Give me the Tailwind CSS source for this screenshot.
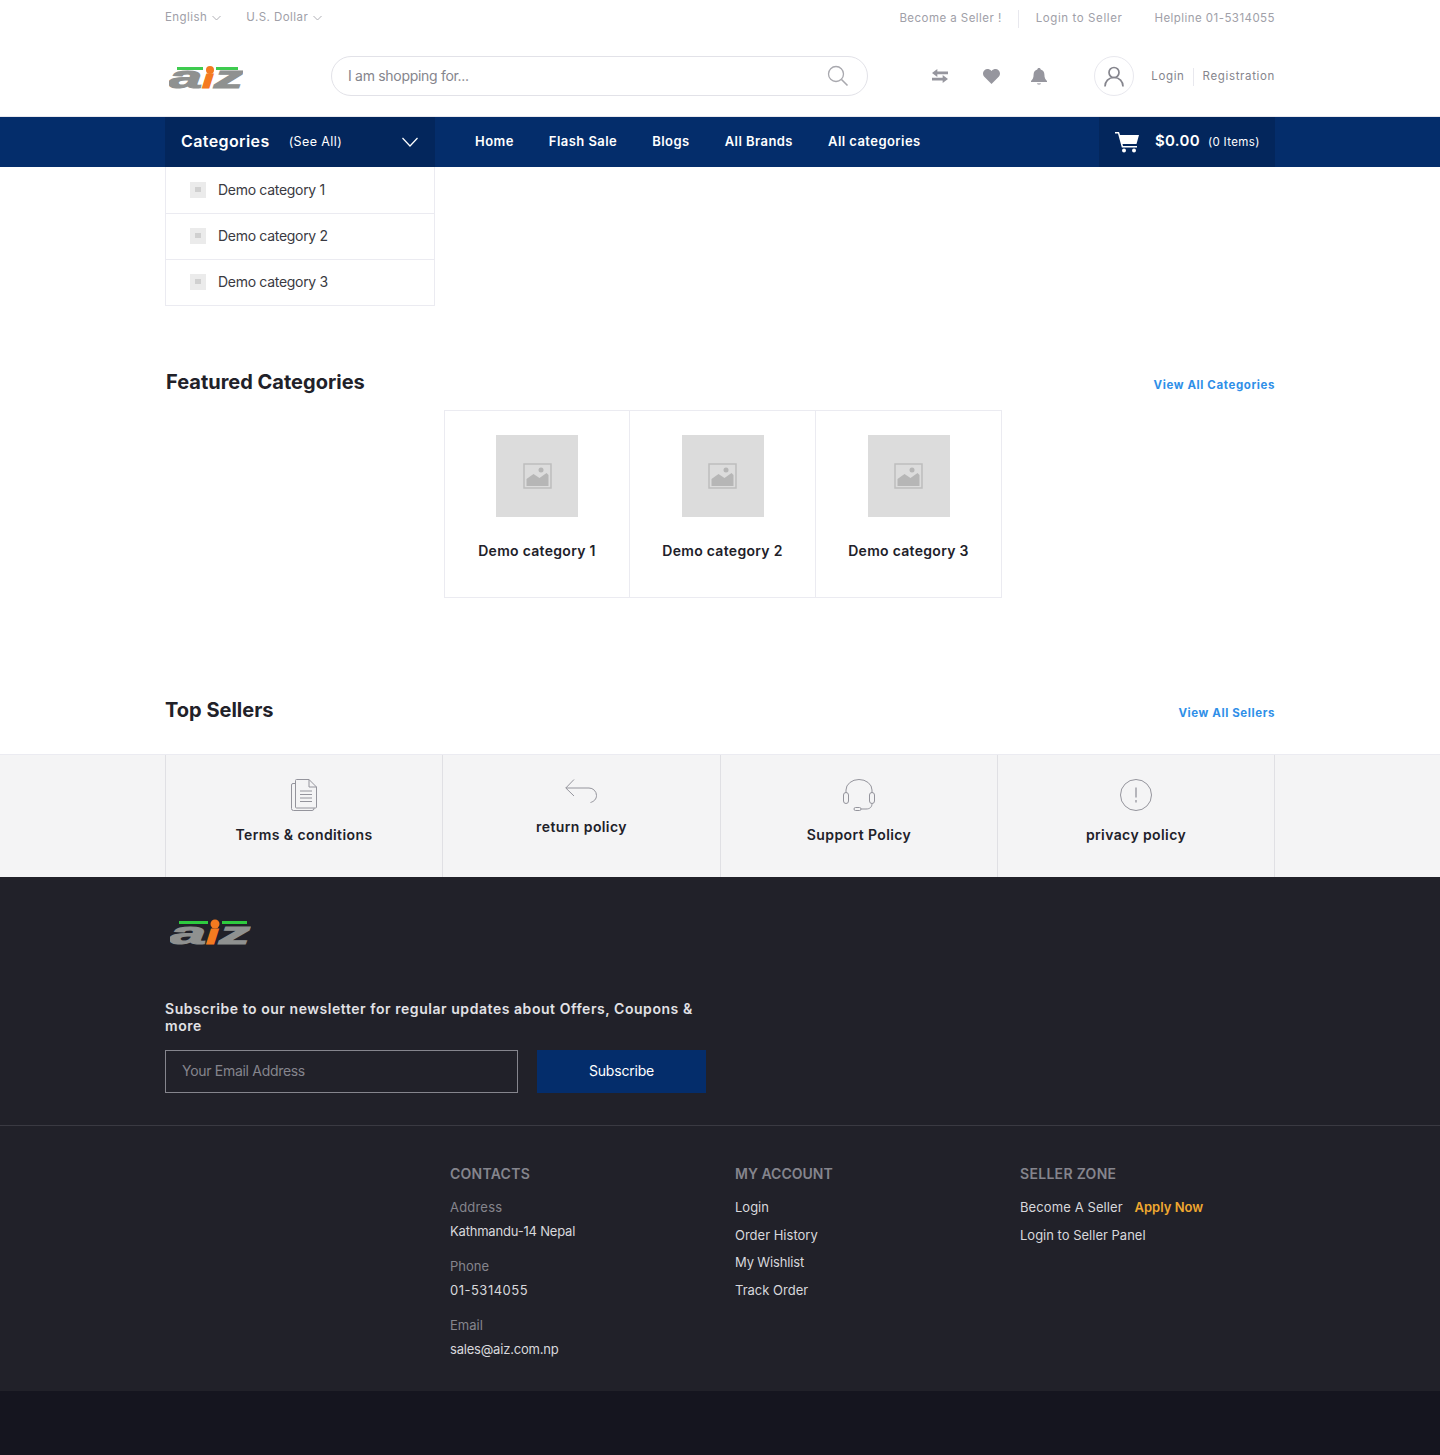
<!DOCTYPE html>
<html lang="en">
<head>
    <meta charset="UTF-8">
    <meta name="viewport" content="width=device-width, initial-scale=1.0">
    <title>Aiz Shop</title>
    <script src="https://cdn.jsdelivr.net/npm/@tailwindcss/browser@4"></script>
</head>
<body class="bg-white text-[#212129] font-['Inter','Liberation_Sans',sans-serif]">

    <!-- Top bar -->
    <div class="w-[1110px] mx-auto h-[36px] flex items-center justify-between text-[11.5px] tracking-[0.45px] text-[#a0a0a8]">
        <div class="flex items-center gap-[25px]">
            <span class="flex items-center gap-[5px]">English
                <svg class="w-[9px] h-[6px]" viewBox="0 0 9 6" fill="none" stroke="#b0b0b6"><path d="M.5 1l4 4 4-4"/></svg>
            </span>
            <span class="flex items-center gap-[5px]">U.S. Dollar
                <svg class="w-[9px] h-[6px]" viewBox="0 0 9 6" fill="none" stroke="#b0b0b6"><path d="M.5 1l4 4 4-4"/></svg>
            </span>
        </div>
        <div class="flex items-center mt-[2px]">
            <span>Become a Seller !</span>
            <span class="w-[1px] h-[18px] bg-[#e8e8ee] mx-[16.5px]"></span>
            <span class="tracking-[0.6px]">Login to Seller</span>
            <span class="ml-[32px]">Helpline 01-5314055</span>
        </div>
    </div>

    <!-- Header -->
    <div class="w-[1110px] mx-auto h-[80px] flex items-center">
        <div class="w-[166px] pl-[4px] mt-[2px]">
            <svg class="w-[74px] h-[38px] block" viewBox="0 0 74 38">
                <rect x="8" y="9" width="26" height="3" fill="#3ecb4f"/>
                <rect x="47" y="9" width="22" height="3" fill="#3ecb4f"/>
                <text x="0" y="30" font-family="Liberation Sans" font-weight="700" font-style="italic" font-size="31" fill="#8f9190" stroke="#8f9190" stroke-width="1.200" textLength="33" lengthAdjust="spacingAndGlyphs">a</text>
                <text x="33" y="30" font-family="Liberation Sans" font-weight="700" font-style="italic" font-size="26" fill="#f47a20" stroke="#f47a20" textLength="12" lengthAdjust="spacingAndGlyphs">ı</text>
                <circle cx="41" cy="12" r="4" fill="#f47a20"/>
                <text x="45" y="30" font-family="Liberation Sans" font-weight="700" font-style="italic" font-size="31" fill="#8f9190" stroke="#8f9190" stroke-width="1.200" textLength="29" lengthAdjust="spacingAndGlyphs">z</text>
            </svg>
        </div>
        <div class="w-[537px] h-[40px] border border-[#e2e2e8] rounded-full flex items-center justify-between pl-[16px] pr-[18px]">
            <span class="text-[14px] tracking-[-0.3px] text-[#85858d] -mt-[2px]">I am shopping for...</span>
            <svg class="w-[22px] h-[22px]" viewBox="0 0 22 22" fill="none" stroke="#a8a8ae" stroke-width="1.300"><circle cx="9" cy="9" r="7.500"/><path d="M14.500 14.500l6 6" stroke-width="1.600"/></svg>
        </div>
        <div class="ml-[64px] flex items-center">
            <svg class="w-[16px] h-[16px]" viewBox="0 0 18 16" fill="#96969e"><path d="M6 0L0 4.500 6 9V6h12V3H6zM12 7l6 4.500-6 4.500v-3H0v-3h12z"/></svg>
            <svg class="w-[17px] h-[15px] ml-[35px]" viewBox="0 0 17 15" fill="#96969e"><path d="M8.500 15L1.300 7.800C-.6 5.800-.3 2.800 1.500 1.200 3.300-.4 6.300-.3 8.500 2c2.200-2.300 5.200-2.400 7-.8 1.800 1.600 2.100 4.600.2 6.600z"/></svg>
            <svg class="w-[16px] h-[17px] ml-[31px]" viewBox="0 0 16 17" fill="#96969e"><path d="M8 0c1 0 1.700.7 1.700 1.500C12 2.200 13.400 4 13.400 6.500c0 3.500 1 5 2.600 6.500v1H0v-1c1.600-1.500 2.600-3 2.600-6.500C2.600 4 4 2.200 6.300 1.500 6.300.7 7 0 8 0z"/><path d="M6 15h4c0 1-.9 2-2 2s-2-1-2-2z" opacity=".6"/></svg>
            <div class="ml-[47px] w-[40px] h-[40px] rounded-full border border-[#e8e8ee] flex items-center justify-center">
                <svg class="w-[20px] h-[21px]" viewBox="0 0 20 21" fill="none" stroke="#85858d" stroke-width="1.700"><circle cx="10" cy="6.500" r="5"/><path d="M1 20.500c0-5 3.500-9 9-9s9 4 9 9"/></svg>
            </div>
        </div>
        <div class="ml-auto flex items-center text-[11.5px] tracking-[0.65px] text-[#85858d] mt-[2px]">
            <span>Login</span>
            <span class="w-[1px] h-[18px] bg-[#e8e8ee] mx-[8.5px]"></span>
            <span>Registration</span>
        </div>
    </div>

    <!-- Nav -->
    <div class="bg-[#042d6b] h-[51px] border-t border-[#e8e8ee]">
        <div class="w-[1110px] mx-auto h-[50px] flex items-stretch text-white">
            <div class="w-[270px] bg-[#03265c] flex items-center pl-[16px] pr-[17px]">
                <span class="text-[16px] font-semibold tracking-[0.4px] mb-[2px]">Categories</span>
                <span class="text-[12.5px] ml-[19px] tracking-[0.4px]">(See All)</span>
                <svg class="w-[16px] h-[10px] ml-auto" viewBox="0 0 16 10" fill="none" stroke="#fff" stroke-width="1.200"><path d="M.5 1l7.500 8 7.500-8"/></svg>
            </div>
            <div class="flex items-center gap-[35px] pl-[40px] text-[13px] font-semibold tracking-[0.45px]">
                <span>Home</span>
                <span>Flash Sale</span>
                <span>Blogs</span>
                <span>All Brands</span>
                <span>All categories</span>
            </div>
            <div class="ml-auto w-[176px] bg-[#03265c] flex items-center pl-[16px]">
                <svg class="w-[24px] h-[21px]" viewBox="0 0 24 21" fill="#fff"><path d="M0 0h4l1 3h19l-2.500 9H7.500l.5 2h14v1.500H6.800L3 1.500H0z"/><circle cx="9" cy="18.500" r="2"/><circle cx="19" cy="18.500" r="2"/></svg>
                <span class="text-[15px] font-semibold ml-[16px] tracking-[0.3px] mb-[2px]">$0.00</span>
                <span class="text-[11.5px] ml-[8px] tracking-[0.35px] mt-[2px]">(0 Items)</span>
            </div>
        </div>
    </div>

    <!-- Category list -->
    <div class="w-[1110px] mx-auto">
        <div class="w-[270px] border-x border-b border-[#ebebf1] text-[14px] tracking-[-0.3px] text-[#3a3a42]">
            <div class="h-[47px] border-b border-[#ebebf1] flex items-center pl-[24px] pb-[1px]">
                <span class="w-[16px] h-[16px] bg-[#ebebeb] flex items-center justify-center mr-[12px]"><svg class="w-[6px] h-[5px]" viewBox="0 0 6 5" fill="#d0d0d0"><path d="M0 0h6v5H0z"/></svg></span>
                Demo category 1
            </div>
            <div class="h-[46px] border-b border-[#ebebf1] flex items-center pl-[24px] pb-[2px]">
                <span class="w-[16px] h-[16px] bg-[#ebebeb] flex items-center justify-center mr-[12px]"><svg class="w-[6px] h-[5px]" viewBox="0 0 6 5" fill="#d0d0d0"><path d="M0 0h6v5H0z"/></svg></span>
                Demo category 2
            </div>
            <div class="h-[45px] flex items-center pl-[24px] pb-[2px]">
                <span class="w-[16px] h-[16px] bg-[#ebebeb] flex items-center justify-center mr-[12px]"><svg class="w-[6px] h-[5px]" viewBox="0 0 6 5" fill="#d0d0d0"><path d="M0 0h6v5H0z"/></svg></span>
                Demo category 3
            </div>
        </div>
    </div>

    <!-- Featured Categories -->
    <div class="w-[1110px] mx-auto mt-[61px]">
        <div class="h-[30px] flex items-center justify-between">
            <h2 class="text-[20px] font-bold leading-[30px] ml-[1px]">Featured Categories</h2>
            <a class="text-[11.5px] font-bold tracking-[0.6px] text-[#2f8fe8] mt-[8px]">View All Categories</a>
        </div>
        <div class="mt-[13px] ml-[279px] w-[558px] h-[188px] grid grid-cols-[185px_186px_185px] border border-[#ebebf1]">
            <div class="flex flex-col items-center pt-[24px] border-r border-[#ebebf1]">
                <div class="w-[82px] h-[82px] bg-[#dcdcdc] flex items-center justify-center">
                    <svg class="w-[29px] h-[26px]" viewBox="0 0 29 26"><rect x="1" y="1" width="27" height="24" fill="none" stroke="#bdbdbd" stroke-width="1.500"/><path d="M3.500 23v-7l7-5 6 4 7-5 2 2v11z" fill="#b6b6b6"/><circle cx="18" cy="7" r="2.500" fill="#b6b6b6"/></svg>
                </div>
                <div class="mt-[23px] text-[14px] font-semibold tracking-[0.3px]">Demo category 1</div>
            </div>
            <div class="flex flex-col items-center pt-[24px] border-r border-[#ebebf1]">
                <div class="w-[82px] h-[82px] bg-[#dcdcdc] flex items-center justify-center">
                    <svg class="w-[29px] h-[26px]" viewBox="0 0 29 26"><rect x="1" y="1" width="27" height="24" fill="none" stroke="#bdbdbd" stroke-width="1.500"/><path d="M3.500 23v-7l7-5 6 4 7-5 2 2v11z" fill="#b6b6b6"/><circle cx="18" cy="7" r="2.500" fill="#b6b6b6"/></svg>
                </div>
                <div class="mt-[23px] text-[14px] font-semibold tracking-[0.3px]">Demo category 2</div>
            </div>
            <div class="flex flex-col items-center pt-[24px]">
                <div class="w-[82px] h-[82px] bg-[#dcdcdc] flex items-center justify-center">
                    <svg class="w-[29px] h-[26px]" viewBox="0 0 29 26"><rect x="1" y="1" width="27" height="24" fill="none" stroke="#bdbdbd" stroke-width="1.500"/><path d="M3.500 23v-7l7-5 6 4 7-5 2 2v11z" fill="#b6b6b6"/><circle cx="18" cy="7" r="2.500" fill="#b6b6b6"/></svg>
                </div>
                <div class="mt-[23px] text-[14px] font-semibold tracking-[0.3px]">Demo category 3</div>
            </div>
        </div>
    </div>

    <!-- Top Sellers -->
    <div class="w-[1110px] mx-auto mt-[97px] h-[59px]">
        <div class="h-[30px] flex items-center justify-between">
            <h2 class="text-[20px] font-bold leading-[30px]">Top Sellers</h2>
            <a class="text-[11.5px] font-bold tracking-[0.6px] text-[#2f8fe8] mt-[8px]">View All Sellers</a>
        </div>
    </div>

    <!-- Policies -->
    <div class="bg-[#f4f4f5] border-t border-[#ebebf1] h-[123px]">
        <div class="w-[1110px] mx-auto h-full grid grid-cols-[277px_278px_277px_276px] border-x border-[#e0e0e4] text-[14px] font-semibold tracking-[0.4px]">
            <div class="flex flex-col items-center pt-[24px] border-r border-[#e0e0e4]">
                <svg class="w-[26px] h-[32px]" viewBox="0 0 26 32" fill="none" stroke="#94949c"><path d="M4.500 1.500a1 1 0 0 1 1-1H18l7.500 7.500v20a1 1 0 0 1-1 1h-19a1 1 0 0 1-1-1zM18 .5V8h7.500"/><path d="M4.500 4.500H2A1.500 1.500 0 0 0 .5 6v23.500a2 2 0 0 0 2 2H21a2 2 0 0 0 2-2V29M9 12h12M9 15.500h12M9 19h12M9 22.500h12"/></svg>
                <div class="mt-[14px] leading-[20px]">Terms &amp; conditions</div>
            </div>
            <div class="flex flex-col items-center pt-[24px] border-r border-[#e0e0e4]">
                <svg class="w-[32px] h-[24px] -ml-[1px]" viewBox="0 0 32 24" fill="none" stroke="#94949c"><path d="M9 .5L.8 9l8.200 8M.8 9H24a7.500 7.500 0 0 1 7.500 7.500c0 3.500-2.500 6-6 7"/></svg>
                <div class="mt-[14px] leading-[20px]">return policy</div>
            </div>
            <div class="flex flex-col items-center pt-[24px] border-r border-[#e0e0e4]">
                <svg class="w-[32px] h-[32px]" viewBox="0 0 32 32" fill="none" stroke="#94949c"><path d="M3 14v-3a13 10.500 0 0 1 26 0v3"/><rect x=".5" y="13.500" width="5" height="11" rx="2.500"/><rect x="26.500" y="13.500" width="5" height="11" rx="2.500"/><path d="M29 24.500c0 3.500-2 5.500-6 5.500h-5"/><rect x="11" y="28.500" width="7" height="3" rx="1.500"/></svg>
                <div class="mt-[14px] leading-[20px]">Support Policy</div>
            </div>
            <div class="flex flex-col items-center pt-[24px]">
                <svg class="w-[32px] h-[32px]" viewBox="0 0 32 32" fill="none" stroke="#94949c"><circle cx="16" cy="16" r="15.500"/><path d="M16 8.500v10M16 21v2.500" stroke-width="1.300"/></svg>
                <div class="mt-[14px] leading-[20px]">privacy policy</div>
            </div>
        </div>
    </div>

    <!-- Footer -->
    <footer class="bg-[#212129] h-[514px]">
        <div class="w-[1110px] mx-auto h-[248px] pt-[37px]">
            <svg class="w-[81px] h-[38px] ml-[5px] block" viewBox="0 0 81 38">
                <rect x="9" y="7" width="29" height="3" fill="#2ecb3f"/>
                <rect x="52" y="7" width="25" height="3" fill="#2ecb3f"/>
                <text x="0" y="30" font-family="Liberation Sans" font-weight="700" font-style="italic" font-size="31" fill="#8f9190" stroke="#8f9190" stroke-width="1.200" textLength="36" lengthAdjust="spacingAndGlyphs">a</text>
                <text x="36" y="30" font-family="Liberation Sans" font-weight="700" font-style="italic" font-size="27" fill="#f47a20" stroke="#f47a20" textLength="13" lengthAdjust="spacingAndGlyphs">ı</text>
                <circle cx="45" cy="10" r="4.500" fill="#f47a20"/>
                <text x="49" y="30" font-family="Liberation Sans" font-weight="700" font-style="italic" font-size="31" fill="#8f9190" stroke="#8f9190" stroke-width="1.200" textLength="31" lengthAdjust="spacingAndGlyphs">z</text>
            </svg>
            <div class="w-[540px] mt-[48px] text-[14px] leading-[17px] font-semibold tracking-[0.55px] text-[#e2e2e6]">Subscribe to our newsletter for regular updates about Offers, Coupons &amp; more</div>
            <div class="mt-[16px] flex">
                <div class="w-[353px] h-[43px] border border-[#85858d] flex items-center pl-[16px] pb-[2px] text-[14px] tracking-[-0.3px] text-[#85858d]">Your Email Address</div>
                <div class="ml-[19px] w-[169px] h-[43px] bg-[#042d6b] flex items-center justify-center pb-[2px] text-[14px] tracking-[-0.2px] text-white">Subscribe</div>
            </div>
        </div>
        <div class="border-t border-[#3a3a42]">
            <div class="w-[1110px] mx-auto pl-[285px] pt-[39px] grid grid-cols-[285px_285px_255px] text-[13px] text-[#d8d8dc]">
                <div>
                    <h4 class="text-[14px] font-semibold tracking-[0.25px] leading-[17px] text-[#85858d] mb-[15px]">CONTACTS</h4>
                    <div class="text-[#85858d] leading-[20px] tracking-[0.2px]">Address</div>
                    <div class="leading-[20px] mt-[4px] tracking-[-0.2px]">Kathmandu-14 Nepal</div>
                    <div class="text-[#85858d] leading-[20px] mt-[15px]">Phone</div>
                    <div class="leading-[20px] mt-[4px] tracking-[0.5px]">01-5314055</div>
                    <div class="text-[#85858d] leading-[20px] mt-[15px]">Email</div>
                    <div class="leading-[20px] mt-[4px] tracking-[-0.2px]">sales@aiz.com.np</div>
                </div>
                <div>
                    <h4 class="text-[14px] font-semibold leading-[17px] text-[#85858d] mb-[15px]">MY ACCOUNT</h4>
                    <div class="leading-[20px]">Login</div>
                    <div class="leading-[20px] mt-[8px]">Order History</div>
                    <div class="leading-[20px] mt-[7px] tracking-[-0.15px]">My Wishlist</div>
                    <div class="leading-[20px] mt-[8px]">Track Order</div>
                </div>
                <div>
                    <h4 class="text-[14px] font-semibold tracking-[0.3px] leading-[17px] text-[#85858d] mb-[15px]">SELLER ZONE</h4>
                    <div class="leading-[20px] tracking-[0.1px]">Become A Seller <span class="ml-[8px] font-semibold text-[#f0a830] tracking-[0px]">Apply Now</span></div>
                    <div class="leading-[20px] mt-[8px]">Login to Seller Panel</div>
                </div>
            </div>
        </div>
    </footer>
    <div class="bg-[#15151f] h-[64px]"></div>

</body>
</html>
